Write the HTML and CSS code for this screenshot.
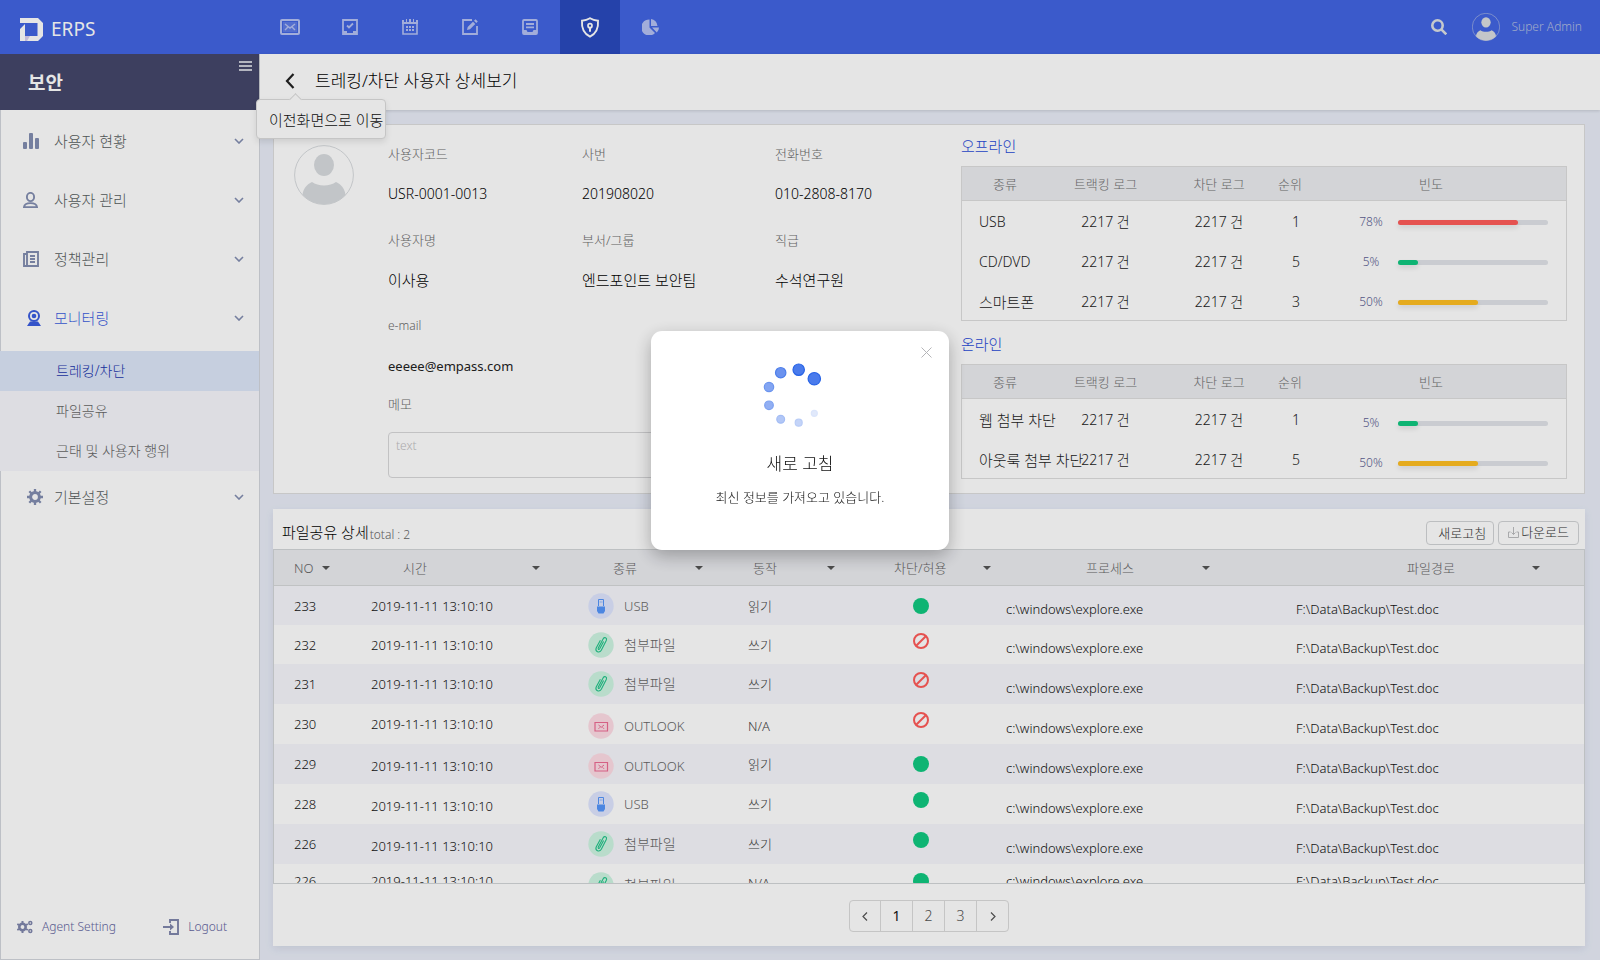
FILE: index.html
```html
<!DOCTYPE html>
<html lang="ko">
<head>
<meta charset="utf-8">
<title>ERPS - 트레킹/차단 사용자 상세보기</title>
<link rel="stylesheet" href="styles.css">
</head>
<body>
<svg class="sprite" aria-hidden="true">
  <symbol id="chev-down" viewBox="0 0 10 6"><path d="M1 1l4 4 4-4" fill="none" stroke="currentColor" stroke-width="1.6"/></symbol>
  <symbol id="person" viewBox="0 0 60 60"><circle cx="30" cy="30" r="29.4" fill="none" stroke="currentColor" stroke-width="1"/><ellipse cx="30" cy="20" rx="10" ry="11"/><path d="M8.500 50C9 44 13 39 18 37c6 4.500 18 4.500 24 0 5 2 9 7 9.500 13A29.500 29.500 0 0 1 8.500 50z"/></symbol>
  <symbol id="usb" viewBox="0 0 26 26"><circle cx="13" cy="13" r="12.700" fill="#dfe6ff"/><path d="M10.500 13V6.500h5V13" fill="none" stroke="#5596fb"/><path d="M11.800 8.500h.8v1h-.8zM13.500 8.500h.8v1h-.8z" fill="#5596fb"/><path d="M9 13.500h8V18l-1.500 2.500h-5L9 18z" fill="#5596fb"/></symbol>
  <symbol id="clip" viewBox="0 0 26 26"><circle cx="13" cy="13" r="12.700" fill="#cef5e3"/><path d="M15.600 9.500l-3.900 7.300c-.7 1.200-2 .6-1.400-.7l4.900-9.400c1.200-2 4.100-.8 3.200 1.500l-5.100 10c-2 3.300-6.500 1.300-5.100-2.200l4.200-7.800" fill="none" stroke="#23c489" stroke-width="1.100"/></symbol>
  <symbol id="mail" viewBox="0 0 26 26"><circle cx="13" cy="13" r="12.700" fill="#ffdde6"/><path d="M7 9.500h12.500v8.500H7z" fill="none" stroke="#ee6b93" stroke-width="1.200"/><path d="M10.500 12l2.700 2.300L16 12M10.500 15.800l1.500-1.500M16 15.800l-1.500-1.500" fill="none" stroke="#ee6b93"/></symbol>
  <symbol id="allow" viewBox="0 0 16 16"><circle cx="8" cy="8" r="8" fill="#10c981"/></symbol>
  <symbol id="block" viewBox="0 0 16 16"><circle cx="8" cy="8" r="7" fill="none" stroke="#ff5c5a" stroke-width="2"/><path d="M3.200 12.800l9.600-9.600" stroke="#ff5c5a" stroke-width="2"/></symbol>
</svg>
<div class="app">
  <header class="topbar">
    <a class="brand" href="#">
      <svg width="23" height="23" viewBox="0 0 23 23"><path fill="#fff" d="M0 0h18l5 5v13l-5 5H0V11l5-5v12h12.500V5H0z"/><path fill="#d9cff0" d="M5 18h5l-3 5H5z"/></svg>
      <span>ERPS</span>
    </a>
    <nav class="topnav" aria-label="주 메뉴">
      <a href="#" aria-label="메일"><svg width="20" height="16" viewBox="0 0 20 16"><rect x="1" y="1" width="18" height="14" rx="1" fill="none" stroke="currentColor" stroke-width="2"/><path d="M5 5l5 4 5-4M5 11l3-3M15 11l-3-3" fill="none" stroke="currentColor" stroke-width="1.400"/><path d="M3 3h14v10H3z" fill="currentColor" opacity=".25"/></svg></a>
      <a href="#" aria-label="결재"><svg width="16" height="16" viewBox="0 0 16 16"><path d="M1 1h14v14H1z" fill="none" stroke="currentColor" stroke-width="1.800"/><path d="M1 12h4v2h6v-2h4v3H1z" fill="currentColor"/><path d="M5 6.500l2 2L11 4.500" fill="none" stroke="currentColor" stroke-width="1.800"/></svg></a>
      <a href="#" aria-label="일정"><svg width="16" height="16" viewBox="0 0 16 16"><path d="M1 4h14v11H1z" fill="none" stroke="currentColor" stroke-width="1.600"/><path d="M0 1h2v2h2V0h1v3h2V0h2v3h2V0h1v3h2V1h2v4H0zM4 7h2v2H4zM7 7h2v2H7zM10 7h2v2h-2zM4 10h2v2H4zM7 10h2v2H7zM10 10h2v2h-2z" fill="currentColor"/></svg></a>
      <a href="#" aria-label="작성"><svg width="16" height="16" viewBox="0 0 16 16"><path d="M10 1H1v14h14V7" fill="none" stroke="currentColor" stroke-width="1.800"/><path d="M5 11l.7-3L11 2.700 13.300 5 8 10.300zM12 1.700L13.500.2 15.800 2.500 14.300 4z" fill="currentColor"/></svg></a>
      <a href="#" aria-label="문서"><svg width="16" height="16" viewBox="0 0 16 16"><rect x="1" y="1" width="14" height="14" rx="1" fill="none" stroke="currentColor" stroke-width="1.800"/><path d="M4 4h8v2H4zM4 7.500h8v1.800H4zM1 11h3.500l1 2h5l1-2H15v4H1z" fill="currentColor"/></svg></a>
      <a href="#" class="active" aria-label="보안" aria-current="page"><svg width="20" height="21" viewBox="0 0 20 21"><path d="M10 1.200c2.500 1.600 5 2.300 8 2.500.6 7.300-1.500 12.800-8 16C3.500 16.500 1.400 11 2 3.700c3-.2 5.500-.9 8-2.500z" fill="none" stroke="currentColor" stroke-width="1.900"/><circle cx="10" cy="8.700" r="2" fill="none" stroke="currentColor" stroke-width="1.700"/><path d="M9 10.500h2v4.200H9z" fill="currentColor"/></svg></a>
      <a href="#" aria-label="통계"><svg width="17" height="16" viewBox="0 0 17 16"><path d="M7.500.5v8l5.500 5.500A8 8 0 1 1 7.500.5z" fill="currentColor"/><path d="M9 0a7.500 7.500 0 0 1 6.500 7H9zM10 8.500h7a7 7 0 0 1-2.200 5z" fill="currentColor"/></svg></a>
    </nav>
    <div class="account">
      <button class="plain" type="button" aria-label="검색"><svg width="16" height="16" viewBox="0 0 16 16" fill="none" stroke="#dde0e4" stroke-width="2.600"><circle cx="6.500" cy="6.500" r="5.200"/><path d="M10.300 10.300l5 5"/></svg></button>
      <svg class="account-photo" width="28" height="28"><use href="#person"/></svg>
      <span>Super Admin</span>
    </div>
  </header>

  <aside class="sidebar">
    <div class="side-title">
      <h2>보안</h2>
      <button class="plain" type="button" aria-label="메뉴 접기"><svg width="13" height="11" viewBox="0 0 13 11"><path d="M0 1h13M0 5h13M0 9h13" stroke="#c9cbd6" stroke-width="2"/></svg></button>
    </div>
    <nav class="side-nav" aria-label="보안 메뉴">
      <a class="item" href="#"><span class="ico"><svg width="16" height="16" viewBox="0 0 16 16" fill="currentColor"><rect y="9" width="4" height="7" rx="1"/><rect x="6" width="4" height="16" rx="1"/><rect x="12" y="5" width="4" height="11" rx="1"/></svg></span>사용자 현황<svg class="chev" width="10" height="6"><use href="#chev-down"/></svg></a>
      <a class="item" href="#"><span class="ico"><svg width="16" height="16" viewBox="0 0 16 16" fill="none" stroke="currentColor" stroke-width="1.900"><ellipse cx="7.500" cy="5" rx="3.600" ry="4.100"/><path d="M1 15.100c.3-3 2-4 6.500-4s6.200 1 6.500 4z"/></svg></span>사용자 관리<svg class="chev" width="10" height="6"><use href="#chev-down"/></svg></a>
      <a class="item" href="#"><span class="ico"><svg width="16" height="16" viewBox="0 0 16 16" fill="none" stroke="currentColor" stroke-width="1.900"><path d="M4 1h11v14H1V3h3zM4 1v14M7 5h5M7 8h5M7 11h5"/></svg></span>정책관리<svg class="chev" width="10" height="6"><use href="#chev-down"/></svg></a>
      <a class="item current" href="#"><span class="ico inset"><svg width="14" height="16" viewBox="0 0 14 16"><circle cx="7" cy="6" r="5" fill="none" stroke="currentColor" stroke-width="2"/><circle cx="7" cy="6" r="2.300" fill="currentColor"/><path d="M3 11.500h8l3 4.500H0z" fill="currentColor"/></svg></span>모니터링<svg class="chev" width="10" height="6"><use href="#chev-down"/></svg></a>
      <ul class="submenu">
        <li><a class="selected" href="#">트레킹/차단</a></li>
        <li><a href="#">파일공유</a></li>
        <li><a href="#">근태 및 사용자 행위</a></li>
      </ul>
      <a class="item last" href="#"><span class="ico inset"><svg width="16" height="16" viewBox="0 0 16 16" fill="none" stroke="currentColor"><circle cx="8" cy="8" r="4.400" stroke-width="3"/><path d="M8 0v3M8 13v3M0 8h3M13 8h3M2.300 2.300l2.200 2.200M11.500 11.500l2.200 2.200M2.300 13.700l2.200-2.200M11.500 4.500l2.200-2.200" stroke-width="2.300"/></svg></span>기본설정<svg class="chev" width="10" height="6"><use href="#chev-down"/></svg></a>
    </nav>
    <div class="side-foot">
      <a href="#"><svg width="16" height="14" viewBox="0 0 16 14" fill="none" stroke="currentColor"><circle cx="5.500" cy="7" r="3.200" stroke-width="2.600"/><path d="M5.500 1v2M5.500 11v2M.3 4l1.800 1M9 9l1.800 1M.3 10l1.800-1M9 5l1.800-1" stroke-width="2"/><circle cx="13.300" cy="3" r="1.500" stroke-width="1.500"/><circle cx="13.300" cy="11" r="1.500" stroke-width="1.500"/></svg>Agent Setting</a>
      <a href="#"><svg width="16" height="16" viewBox="0 0 16 16" fill="none" stroke="currentColor" stroke-width="1.900"><path d="M7 4V1h8v14H7v-3M0 8h9"/><path d="M7 4.500L11 8l-4 3.500z" fill="currentColor" stroke="none"/></svg>Logout</a>
    </div>
  </aside>

  <main class="main">
    <div class="page-head">
      <button class="plain back" type="button" aria-describedby="back-tip" aria-label="이전"><svg width="10" height="16" viewBox="0 0 10 16"><path d="M8.500 1L2 8l6.500 7" fill="none" stroke="#222" stroke-width="2.200"/></svg></button>
      <h1>트레킹/차단 사용자 상세보기</h1>
      <div class="tooltip" id="back-tip" role="tooltip">이전화면으로 이동</div>
    </div>

    <div class="content">
      <section class="card profile">
        <svg class="photo" width="60" height="60"><use href="#person"/></svg>
        <div class="details">
          <dl class="fields">
            <div><dt>사용자코드</dt><dd>USR-0001-0013</dd></div>
            <div><dt>사번</dt><dd>201908020</dd></div>
            <div><dt>전화번호</dt><dd>010-2808-8170</dd></div>
            <div><dt>사용자명</dt><dd class="ko">이사용</dd></div>
            <div><dt>부서/그룹</dt><dd class="ko">엔드포인트 보안팀</dd></div>
            <div><dt>직급</dt><dd class="ko">수석연구원</dd></div>
            <div><dt class="latin">e-mail</dt><dd class="email">eeeee@empass.com</dd></div>
          </dl>
          <label for="memo">메모</label>
          <textarea id="memo" placeholder="text"></textarea>
        </div>
        <div class="usage">
          <h3>오프라인</h3>
          <table class="usage-table">
            <colgroup><col class="u-type"><col class="u-track"><col class="u-block"><col class="u-rank"><col></colgroup>
            <thead><tr><th>종류</th><th>트랙킹 로그</th><th>차단 로그</th><th class="rank">순위</th><th class="freq">빈도</th></tr></thead>
            <tbody>
              <tr><td class="type">USB</td><td>2217 건</td><td>2217 건</td><td class="rank">1</td><td><div class="meter"><span>78%</span><div class="track"><div class="fill red" style="width:80%"></div></div></div></td></tr>
              <tr><td class="type">CD/DVD</td><td>2217 건</td><td>2217 건</td><td class="rank">5</td><td><div class="meter"><span>5%</span><div class="track"><div class="fill green" style="width:13%"></div></div></div></td></tr>
              <tr><td class="type ko">스마트폰</td><td>2217 건</td><td>2217 건</td><td class="rank">3</td><td><div class="meter"><span>50%</span><div class="track"><div class="fill yellow" style="width:53%"></div></div></div></td></tr>
            </tbody>
          </table>
          <h3>온라인</h3>
          <table class="usage-table online">
            <colgroup><col class="u-type"><col class="u-track"><col class="u-block"><col class="u-rank"><col></colgroup>
            <thead><tr><th>종류</th><th>트랙킹 로그</th><th>차단 로그</th><th class="rank">순위</th><th class="freq">빈도</th></tr></thead>
            <tbody>
              <tr><td class="type ko">웹 첨부 차단</td><td>2217 건</td><td>2217 건</td><td class="rank">1</td><td><div class="meter"><span>5%</span><div class="track"><div class="fill green" style="width:13%"></div></div></div></td></tr>
              <tr><td class="type ko">아웃룩 첨부 차단</td><td>2217 건</td><td>2217 건</td><td class="rank">5</td><td><div class="meter"><span>50%</span><div class="track"><div class="fill yellow" style="width:53%"></div></div></div></td></tr>
            </tbody>
          </table>
        </div>
      </section>

      <section class="card log">
        <div class="log-head">
          <h3>파일공유 상세</h3><span class="total">total : 2</span>
          <div class="actions">
            <button type="button" class="refresh">새로고침</button>
            <button type="button" class="download"><svg width="11" height="11" viewBox="0 0 11 11" fill="none" stroke="#bbbdbf"><path d="M2.500 5H.5v5.500h10V5h-2M5.500 0v7.500M3.500 5.500l2 2 2-2"/></svg>다운로드</button>
          </div>
        </div>
        <div class="log-scroll">
          <table class="log-table">
            <colgroup><col class="c-no"><col class="c-time"><col class="c-kind"><col class="c-act"><col class="c-state"><col class="c-proc"><col></colgroup>
            <thead><tr>
              <th class="h-no"><button type="button">NO</button></th>
              <th class="h-time"><button type="button">시간</button></th>
              <th class="h-kind"><button type="button">종류</button></th>
              <th class="h-act"><button type="button">동작</button></th>
              <th class="h-state"><button type="button">차단/허용</button></th>
              <th class="h-proc"><button type="button">프로세스</button></th>
              <th class="h-path"><button type="button">파일경로</button></th>
            </tr></thead>
            <tbody>
              <tr class="tight"><td class="no">233</td><td class="time">2019-11-11 13:10:10</td><td class="kind"><div><svg width="26" height="26"><use href="#usb"/></svg>USB</div></td><td class="act">읽기</td><td class="state"><svg width="16" height="16" role="img" aria-label="허용"><use href="#allow"/></svg></td><td class="proc">c:\windows\explore.exe</td><td class="path">F:\Data\Backup\Test.doc</td></tr>
              <tr class="tight"><td class="no">232</td><td class="time">2019-11-11 13:10:10</td><td class="kind ko"><div><svg width="26" height="26"><use href="#clip"/></svg>첨부파일</div></td><td class="act">쓰기</td><td class="state raised"><svg width="16" height="16" role="img" aria-label="차단"><use href="#block"/></svg></td><td class="proc">c:\windows\explore.exe</td><td class="path">F:\Data\Backup\Test.doc</td></tr>
              <tr><td class="no">231</td><td class="time">2019-11-11 13:10:10</td><td class="kind ko"><div><svg width="26" height="26"><use href="#clip"/></svg>첨부파일</div></td><td class="act">쓰기</td><td class="state raised"><svg width="16" height="16" role="img" aria-label="차단"><use href="#block"/></svg></td><td class="proc">c:\windows\explore.exe</td><td class="path">F:\Data\Backup\Test.doc</td></tr>
              <tr><td class="no">230</td><td class="time">2019-11-11 13:10:10</td><td class="kind low"><div><svg width="26" height="26"><use href="#mail"/></svg>OUTLOOK</div></td><td class="act low">N/A</td><td class="state raised"><svg width="16" height="16" role="img" aria-label="차단"><use href="#block"/></svg></td><td class="proc">c:\windows\explore.exe</td><td class="path">F:\Data\Backup\Test.doc</td></tr>
              <tr><td class="no">229</td><td class="time low">2019-11-11 13:10:10</td><td class="kind low"><div><svg width="26" height="26"><use href="#mail"/></svg>OUTLOOK</div></td><td class="act">읽기</td><td class="state"><svg width="16" height="16" role="img" aria-label="허용"><use href="#allow"/></svg></td><td class="proc">c:\windows\explore.exe</td><td class="path">F:\Data\Backup\Test.doc</td></tr>
              <tr><td class="no">228</td><td class="time low">2019-11-11 13:10:10</td><td class="kind"><div><svg width="26" height="26"><use href="#usb"/></svg>USB</div></td><td class="act">쓰기</td><td class="state raised"><svg width="16" height="16" role="img" aria-label="허용"><use href="#allow"/></svg></td><td class="proc">c:\windows\explore.exe</td><td class="path">F:\Data\Backup\Test.doc</td></tr>
              <tr><td class="no">226</td><td class="time low">2019-11-11 13:10:10</td><td class="kind ko"><div><svg width="26" height="26"><use href="#clip"/></svg>첨부파일</div></td><td class="act">쓰기</td><td class="state raised"><svg width="16" height="16" role="img" aria-label="허용"><use href="#allow"/></svg></td><td class="proc">c:\windows\explore.exe</td><td class="path">F:\Data\Backup\Test.doc</td></tr>
              <tr class="short"><td class="no">226</td><td class="time">2019-11-11 13:10:10</td><td class="kind ko drop"><div><svg width="26" height="26"><use href="#clip"/></svg>첨부파일</div></td><td class="act low">N/A</td><td class="state"><svg width="16" height="16" role="img" aria-label="허용"><use href="#allow"/></svg></td><td class="proc">c:\windows\explore.exe</td><td class="path">F:\Data\Backup\Test.doc</td></tr>
            </tbody>
          </table>
        </div>
        <nav class="pager" aria-label="페이지">
          <div class="pages">
            <button type="button" aria-label="이전 페이지"><svg width="6" height="9" viewBox="0 0 6 9"><path d="M5 .5l-4 4 4 4" fill="none" stroke="currentColor" stroke-width="1.200"/></svg></button>
            <button type="button" class="on" aria-current="page">1</button>
            <button type="button">2</button>
            <button type="button">3</button>
            <button type="button" aria-label="다음 페이지"><svg width="6" height="9" viewBox="0 0 6 9"><path d="M1 .5l4 4-4 4" fill="none" stroke="currentColor" stroke-width="1.200"/></svg></button>
          </div>
        </nav>
      </section>
    </div>
  </main>
</div>

<div class="backdrop">
  <div class="modal" role="dialog" aria-modal="true" aria-labelledby="modal-title">
    <button class="plain close" type="button" aria-label="닫기"><svg width="11" height="11" viewBox="0 0 11 11"><path d="M.5.5l10 10M10.500.5l-10 10" stroke="#b5b5b8"/></svg></button>
    <svg class="spinner" width="76" height="66" viewBox="0 0 76 66" fill="#4a7bec" stroke="#2763e6" stroke-width="1.200">
      <circle cx="52.300" cy="16.700" r="6.200"/>
      <circle cx="36.700" cy="7.700" r="5.700"/>
      <circle cx="18.700" cy="10.700" r="5.200" opacity=".82"/>
      <circle cx="7" cy="25" r="4.700" opacity=".68"/>
      <circle cx="7" cy="43.300" r="4.300" opacity=".6"/>
      <circle cx="18.700" cy="57.300" r="3.900" opacity=".42"/>
      <circle cx="36.700" cy="60.700" r="3.500" opacity=".32"/>
      <circle cx="52.300" cy="51.300" r="3" opacity=".16"/>
    </svg>
    <h2 id="modal-title">새로 고침</h2>
    <p>최신 정보를 가져오고 있습니다.</p>
  </div>
</div>
</body>
</html>
```
FILE: styles.css
```css
* { box-sizing: border-box; }
body {
  margin: 0;
  font-family: "Noto Sans", "Noto Sans CJK KR", sans-serif;
  font-size: 13px;
  font-weight: 300;
  line-height: 20px;
  color: #111;
  background: #e9edf8;
}
h1, h2, h3, p, dl, dd, ul { margin: 0; padding: 0; font-weight: 300; }
ul { list-style: none; }
a { color: inherit; text-decoration: none; }
button, textarea { font: inherit; color: inherit; }
button { cursor: pointer; }
svg { display: block; flex: none; }
.sprite { position: absolute; width: 0; height: 0; }
.plain { border: 0; padding: 0; background: none; }

.app {
  display: grid;
  grid-template: 54px minmax(0, 1fr) / 260px minmax(0, 1fr);
  height: 100vh;
}

/* top bar */
.topbar {
  grid-column: 1 / -1;
  display: flex;
  align-items: center;
  color: #fff;
  background: #4265e2;
}
.brand {
  display: flex;
  align-items: center;
  gap: 8px;
  width: 260px;
  padding: 4px 0 0 20px;
  font-size: 19px;
  font-weight: 400;
  line-height: 24px;
}
.topnav { display: flex; align-self: stretch; }
.topnav a {
  display: flex;
  align-items: center;
  justify-content: center;
  width: 60px;
  color: #b5c1f3;
}
.topnav .active { color: #fff; background: #2a4abe; }
.account {
  display: flex;
  align-items: center;
  margin-left: auto;
  padding-right: 18px;
  font-size: 12px;
  color: #b4bfe0;
}
.account-photo { margin: 0 11px 0 25px; fill: #dadde0; color: #dadde0; }

/* sidebar */
.sidebar {
  display: flex;
  flex-direction: column;
  border: 1px solid #d3d6dd;
  border-top: 0;
  background: #fff;
}
.side-title {
  display: flex;
  align-items: flex-start;
  justify-content: space-between;
  height: 56px;
  margin-left: -1px;
  padding: 7px 7px 0 28px;
  color: #fff;
  background: #44476a;
}
.side-title h2 { padding-top: 9px; font-size: 19px; font-weight: 700; line-height: 26px; }
.side-nav { padding-top: 1px; }
.item {
  display: flex;
  align-items: center;
  height: 59px;
  padding: 0 15px 0 22px;
  font-size: 15px;
  color: #585e60;
}
.item.last { height: 51px; }
.ico { width: 31px; color: #838eb1; }
.ico.inset { padding-left: 4px; }
.current, .current .ico { color: #3a5de0; }
.chev { margin-left: auto; color: #838eb1; }
.submenu { margin: 4px 0 0 -1px; background: #f6f7fc; font-size: 14px; color: #666; }
.submenu a { display: block; padding-left: 56px; line-height: 40px; }
.submenu .selected { color: #1a35ac; background: #dde7f9; }
.side-foot {
  display: flex;
  justify-content: space-between;
  margin-top: auto;
  padding: 0 32px 22px 16px;
  font-size: 12px;
  color: #6265a0;
}
.side-foot a { display: flex; align-items: center; gap: 9px; }
.side-foot svg { color: #8187ad; }

/* page header */
.main { display: flex; flex-direction: column; min-width: 0; }
.page-head {
  position: relative;
  display: flex;
  align-items: center;
  gap: 20px;
  height: 56px;
  padding: 0 25px 2px;
  background: #fff;
  box-shadow: 0 1px 3px rgba(0, 0, 0, .14);
}
.page-head h1 { font-size: 17px; line-height: 24px; color: #000; }
.tooltip {
  position: absolute;
  top: 45px;
  left: -4px;
  padding: 9px 2px 7px 12px;
  border: 1px solid #dcdcdc;
  border-radius: 4px;
  background: #fff;
  box-shadow: 0 3px 6px rgba(0, 0, 0, .1);
  font-size: 15px;
  line-height: 22px;
  white-space: nowrap;
}
.tooltip::before {
  content: "";
  position: absolute;
  top: -5px;
  left: 34px;
  width: 8px;
  height: 8px;
  border: 1px solid #dcdcdc;
  border-width: 1px 0 0 1px;
  background: #fff;
  transform: rotate(45deg);
}

/* content */
.content {
  flex: 1;
  display: flex;
  flex-direction: column;
  gap: 15px;
  min-height: 0;
  padding: 14px 15px 14px 13px;
}
.card { background: #fff; }
.profile {
  display: grid;
  grid-template-columns: 94px minmax(0, 1fr) minmax(0, 606px);
  padding: 0 17px 14px 20px;
  border: 1px solid #dedede;
}
.photo { margin-top: 20px; color: #d9dcdf; fill: #d9dcdf; }
.details { padding-top: 19px; }
.fields {
  display: grid;
  grid-template-columns: 194px 193px minmax(0, 1fr);
  row-gap: 26px;
  margin-bottom: 18px;
}
.fields dt, .details label { color: #6c6c6c; }
.fields .latin { font-size: 12px; }
.fields dd { margin-top: 20px; font-size: 14px; color: #000; }
.fields .ko { font-size: 15px; }
.fields .email { font-size: 13px; font-weight: 400; color: #222; }
.details label { display: block; }
.details textarea {
  display: block;
  width: calc(100% - 33px);
  height: 46px;
  margin-top: 18px;
  padding: 3px 7px;
  border: 1px solid #d8d8da;
  border-radius: 4px;
  background: none;
  font-size: 12px;
  resize: none;
}
.details textarea::placeholder { color: #bfc0c2; opacity: 1; }

.usage { padding-top: 11px; }
.usage h3 { margin-bottom: 10px; font-size: 15px; color: #1f4ad8; }
.usage table + h3 { margin-top: 13px; }
table { width: 100%; table-layout: fixed; border-collapse: separate; border-spacing: 0; }
th, td { padding: 0; font-weight: 300; white-space: nowrap; }
.usage-table { border: 1px solid #dedede; }
.u-type { width: 86px; }
.u-track { width: 115px; }
.u-block { width: 112px; }
.u-rank { width: 36px; }
.usage-table th { height: 34px; border-bottom: 1px solid #dedede; background: #ebecf0; color: #707070; }
.usage-table th.rank { padding-right: 6px; }
.usage-table td.rank { padding-left: 6px; }
.usage-table .freq { padding-right: 15px; }
.usage-table td { height: 40px; padding-top: 2px; text-align: center; font-size: 14px; color: #222; }
.usage-table tr:last-child td { height: 39px; padding-top: 3px; }
.usage-table .type { padding-left: 17px; text-align: left; }
.usage-table .type.ko { font-size: 15px; }
.meter {
  display: flex;
  align-items: center;
  gap: 13px;
  padding: 0 18px 0 46px;
  font-size: 12px;
  color: #605f94;
}
.online .meter { padding-top: 6px; }
.meter span { width: 28px; }
.track { flex: 1; height: 5px; border-radius: 3px; background: #e1e4e9; }
.fill { height: 5px; border-radius: 3px; box-shadow: 0 3px 5px rgba(0, 0, 0, .1); }
.red { background: #ff5c5a; }
.green { background: #10c981; }
.yellow { background: #ffbf22; }

/* log */
.log {
  flex: 1;
  display: flex;
  flex-direction: column;
  min-height: 0;
  box-shadow: 0 3px 8px rgba(90, 100, 130, .12);
}
.log-head { display: flex; align-items: center; padding: 12px 6px 4px 9px; }
.log-head h3 { padding-bottom: 2px; font-size: 15px; line-height: 22px; color: #000; }
.total { padding: 3px 0 0 1px; font-size: 12px; color: #666; }
.actions { display: flex; gap: 4px; margin-left: auto; }
.actions button {
  display: flex;
  align-items: center;
  height: 24px;
  border: 1px solid #d2d4d6;
  border-radius: 4px;
  background: none;
  color: #333;
}
.actions .refresh { padding: 0 7px 0 11px; }
.actions .download { gap: 2px; padding: 0 9px 2px 9px; }
.log-scroll {
  flex: 1;
  min-height: 0;
  overflow: hidden;
  border: 1px solid #d3d6d8;
}
.c-no { width: 81px; }
.c-time { width: 205px; }
.c-kind { width: 172px; }
.c-act { width: 138px; }
.c-state { width: 128px; }
.c-proc { width: 282px; }
.log-table th { height: 36px; border-bottom: 1px solid #d6d8da; background: #ebecf0; }
.log-table th button {
  display: flex;
  align-items: center;
  justify-content: space-between;
  width: 100%;
  padding: 0;
  border: 0;
  background: none;
  color: #666;
}
.log-table th button::after {
  content: "";
  border: 4px solid transparent;
  border-top-color: #555;
  border-bottom: 0;
}
.log-table .h-no button { padding: 0 25px 0 20px; }
.log-table .h-time button { padding: 0 20px 0 48px; }
.log-table .h-kind button { padding: 0 29px 0 53px; }
.log-table .h-act button { padding: 0 35px 0 21px; }
.log-table .h-state button { padding: 0 7px 0 24px; }
.log-table .h-proc button { padding: 0 70px 0 88px; }
.log-table .h-path button { padding: 0 44px 0 127px; }
.log-table td { height: 40px; }
.log-table .tight td { height: 39px; }
.log-table .short td { height: 34px; }
.log-table tbody tr:nth-child(odd) { background: #f6f7fc; }
.log-table tbody tr.short { background: none; }
.log-table .no { padding-left: 20px; }
.log-table .time { padding-left: 16px; }
.log-table .kind { padding-left: 28px; color: #666; }
.log-table .kind.ko { font-size: 14px; }
.kind div { display: flex; align-items: center; gap: 10px; }
.log-table .act { padding-left: 16px; color: #444; }
.log-table .state { padding-left: 43px; }
.log-table .proc, .log-table .path { padding-top: 7px; }
.log-table .proc { padding-left: 8px; }
.log-table .path { padding-left: 16px; }
.log-table .short .proc, .log-table .short .path { padding-top: 0; }
.log-table .raised { padding-bottom: 8px; }
.log-table .low { padding-top: 3px; }
.log-table .drop { padding-top: 8px; }

.pager { display: flex; justify-content: center; padding: 16px 0 14px; }
.pages { display: flex; border: 1px solid #dcdcdc; border-radius: 4px; }
.pages button {
  display: flex;
  align-items: center;
  justify-content: center;
  width: 32px;
  height: 30px;
  padding: 0;
  border: 0;
  border-right: 1px solid #dcdcdc;
  background: none;
  font-size: 14px;
  color: #555;
}
.pages button:first-child { width: 31px; }
.pages button:last-child { width: 31px; border-right: 0; }
.pages .on { font-weight: 400; color: #111; }

/* loading dialog */
.backdrop {
  position: fixed;
  inset: 0;
  display: flex;
  align-items: center;
  justify-content: center;
  padding-bottom: 79px;
  background: rgba(0, 0, 0, .1);
}
.modal {
  position: relative;
  width: 298px;
  padding: 31px 20px 43px;
  border-radius: 11px;
  background: #fff;
  box-shadow: 0 6px 18px rgba(0, 0, 0, .28);
  text-align: center;
}
.close { position: absolute; top: 16px; right: 17px; }
.spinner { margin: 0 auto 24px; }
.modal h2 { font-size: 17px; line-height: 24px; }
.modal p { margin-top: 11px; }
```
